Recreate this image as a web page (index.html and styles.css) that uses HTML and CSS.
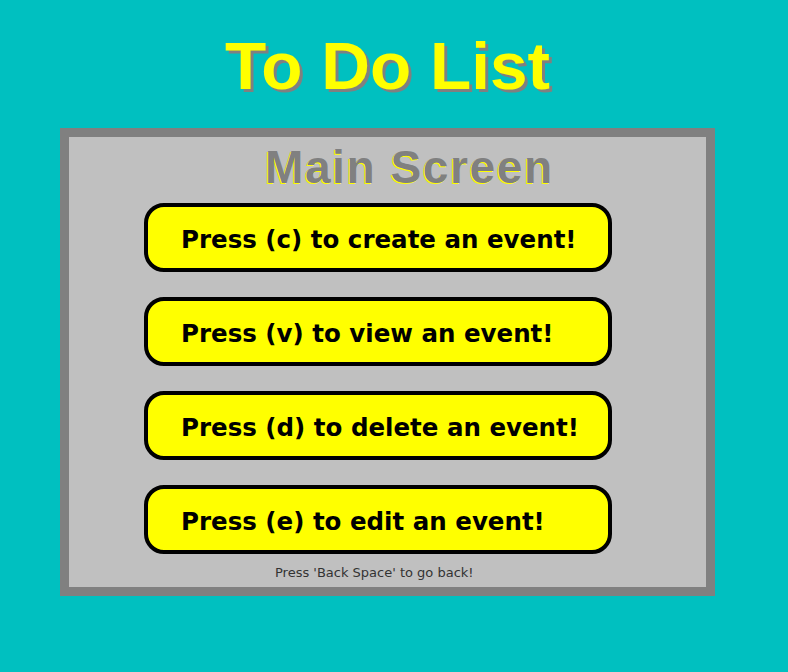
FILE: index.html
```html
<!DOCTYPE html>
<html>
<head>
<meta charset="utf-8">
<title>To Do List</title>
<link rel="stylesheet" href="styles.css">
</head>
<body>
<div class="page">
  <h1 class="title">To Do List</h1>
  <div class="panel">
    <h2 class="subtitle">Main Screen</h2>
    <div class="options">
      <div class="option">Press (c) to create an event!</div>
      <div class="option">Press (v) to view an event!</div>
      <div class="option">Press (d) to delete an event!</div>
      <div class="option">Press (e) to edit an event!</div>
    </div>
    <p class="hint">Press 'Back Space' to go back!</p>
  </div>
</div>
</body>
</html>
```
FILE: styles.css
```css
html, body {
  margin: 0;
  padding: 0;
}
body {
  background: #00c0c0;
  font-family: "Liberation Sans", Arial, sans-serif;
}
.page {
  padding-top: 32px;
  width: 655px;
  margin-left: 60px;
}
.title {
  margin: 0;
  height: 67px;
  font-size: 67.5px;
  line-height: 67px;
  font-weight: bold;
  color: #ffff00;
  text-shadow: 3px 3px 0 #808080;
  text-align: center;
}
.panel {
  margin-top: 29px;
  box-sizing: border-box;
  width: 655px;
  height: 468px;
  border: 9px solid #808080;
  background: #c0c0c0;
  padding-top: 7px;
}
.subtitle {
  margin: 0 0 0 196px;
  height: 46px;
  font-size: 46px;
  line-height: 46px;
  font-weight: bold;
  letter-spacing: 1.6px;
  color: #808080;
  text-shadow: -1px 1px 0 #ffff00;
}
.options {
  margin: 13px 0 0 75px;
  display: flex;
  flex-direction: column;
  gap: 25px;
}
.option {
  box-sizing: border-box;
  width: 468px;
  height: 69px;
  border: 4px solid #000;
  border-radius: 20px;
  background: #ffff00;
  padding: 4px 0 0 33px;
  display: flex;
  align-items: center;
  font-family: "DejaVu Sans", sans-serif;
  font-weight: bold;
  font-size: 24.5px;
  color: #000;
}
.hint {
  margin: 12px 0 0 206px;
  font-family: "DejaVu Sans", sans-serif;
  font-size: 13px;
  line-height: 14px;
  color: #333;
}
```
